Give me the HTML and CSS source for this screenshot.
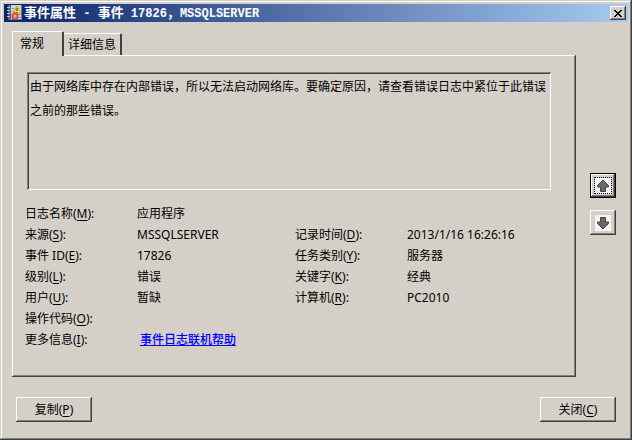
FILE: index.html
```html
<!DOCTYPE html>
<html lang="zh-CN">
<head>
<meta charset="utf-8">
<title>事件属性 - 事件 17826，MSSQLSERVER</title>
<link rel="stylesheet" href="styles.css">
</head>
<body>
<main class="window">
  <header class="titlebar">
    <svg class="app-icon" viewBox="0 0 16 16" aria-hidden="true">
      <rect x="1" y="0" width="14" height="15" fill="#c5d5ea"/>
      <rect x="1" y="0" width="3" height="15" fill="#52637f"/>
      <path d="M0 2.500h3M0 5.500h3M0 8.500h3M0 11.500h3" stroke="#c3cede"/>
      <path d="M5 3.500h3M5 6.500h2M11 9.500h3M11 12.500h3" stroke="#8a9ab4"/>
      <path d="M14 0h1v15H2v-1h12z" fill="#687b9c"/>
      <path d="M10 1l3.500 7h-7z" fill="#ffdf2b" stroke="#dba810"/>
      <path d="M10 3v3M10 7v1" stroke="#463600"/>
      <circle cx="8" cy="11" r="2.500" fill="#fff" stroke="#dc4038" stroke-width="2"/>
      <path d="M7 11h2" stroke="#dc4038"/>
    </svg>
    <h1 class="title">事件属性<span class="latin"> - </span>事件<span class="latin"> 17826</span>，<span class="latin">MSSQLSERVER</span></h1>
    <button class="window-close" type="button" aria-label="关闭窗口">
      <svg viewBox="0 0 8 7" width="8" height="7" shape-rendering="crispEdges"><path d="M0 0h2v1h1v1h2V1h1V0h2v1H7v1H6v1H5v1h1v1h1v1h1v1H6V6H5V5H3v1H2v1H0V6h1V5h1V4h1V3H2V2H1V1H0z"/></svg>
    </button>
  </header>
  <div class="content">
    <section class="tabs">
      <div class="tablist" role="tablist">
        <button class="tab tab-active" type="button" role="tab" aria-selected="true">常规</button>
        <button class="tab" type="button" role="tab" aria-selected="false">详细信息</button>
      </div>
      <div class="panel" role="tabpanel">
        <div class="description">由于网络库中存在内部错误，所以无法启动网络库。要确定原因，请查看错误日志中紧位于此错误之前的那些错误。</div>
        <dl class="details">
          <dt>日志名称(<u>M</u>):</dt><dd class="wide">应用程序</dd>
          <dt>来源(<u>S</u>):</dt><dd>MSSQLSERVER</dd>
          <dt>记录时间(<u>D</u>):</dt><dd>2013/1/16 16:26:16</dd>
          <dt>事件 ID(<u>E</u>):</dt><dd>17826</dd>
          <dt>任务类别(<u>Y</u>):</dt><dd>服务器</dd>
          <dt>级别(<u>L</u>):</dt><dd>错误</dd>
          <dt>关键字(<u>K</u>):</dt><dd>经典</dd>
          <dt>用户(<u>U</u>):</dt><dd>暂缺</dd>
          <dt>计算机(<u>R</u>):</dt><dd>PC2010</dd>
          <dt>操作代码(<u>O</u>):</dt><dd class="wide"></dd>
          <dt>更多信息(<u>I</u>):</dt><dd class="wide"><a class="help" href="#help">事件日志联机帮助</a></dd>
        </dl>
      </div>
    </section>
    <nav class="pager">
      <button class="arrow arrow-default" type="button" aria-label="上一个事件">
        <svg viewBox="0 0 16 16" width="16" height="16"><rect width="16" height="16" fill="#f4f4f4"/><path d="M8 2l5.500 5.500v1.500H10.500v4.500h-5V9h-3V7.500z" fill="#686868" stroke="#444"/></svg>
      </button>
      <button class="arrow" type="button" aria-label="下一个事件">
        <svg viewBox="0 0 16 16" width="16" height="16"><rect width="16" height="16" fill="#f4f4f4"/><path d="M8 14l5.500-5.500V7H10.500V2.500h-5V7h-3v1.500z" fill="#686868" stroke="#444"/></svg>
      </button>
    </nav>
  </div>
  <footer class="actions">
    <button class="command" type="button">复制(<u>P</u>)</button>
    <button class="command" type="button">关闭(<u>C</u>)</button>
  </footer>
</main>
</body>
</html>
```

FILE: styles.css
```css
* { box-sizing: border-box; }

body {
  margin: 0;
  background: #d4d0c8;
  color: #000;
  font: 12px/21px "Noto Sans", "Noto Sans CJK SC", sans-serif;
}

button {
  margin: 0;
  padding: 0;
  border: 0;
  background: #d4d0c8;
  color: #000;
  font: inherit;
}

svg { display: block; }
u { text-underline-offset: 2px; }

.window {
  display: flex;
  flex-direction: column;
  min-height: 100vh;
  padding: 4px;
  box-shadow: inset -1px -1px #404040, inset 1px 1px #d4d0c8, inset -2px -2px #808080, inset 2px 2px #fff;
}

.titlebar {
  display: flex;
  align-items: center;
  height: 18px;
  padding: 0 2px 0 3px;
  background: linear-gradient(to right, #0a246a, #a6caf0);
}

.app-icon { width: 16px; height: 16px; }

.title {
  flex: 1;
  margin: 0 0 0 1px;
  color: #fff;
  font: bold 13px/18px "Noto Sans CJK SC", sans-serif;
  white-space: nowrap;
}

.latin {
  font-family: "Liberation Mono", monospace;
  font-size: 12px;
}

.window-close {
  display: grid;
  place-items: center;
  width: 16px;
  height: 14px;
  box-shadow: inset -1px -1px #404040, inset 1px 1px #fff, inset -2px -2px #808080;
}

.content {
  display: flex;
  flex: 1;
  padding: 9px 12px 0 8px;
}

.tabs {
  display: flex;
  flex: 1;
  flex-direction: column;
}

.tablist {
  display: flex;
  align-items: flex-end;
}

.tab {
  height: 22px;
  padding: 0 4px;
  border: solid #fff;
  border-width: 1px 0 0;
  border-right: 2px solid #404040;
  border-radius: 2px 2px 0 0;
}

.tab-active {
  position: relative;
  width: 52px;
  height: 25px;
  margin-bottom: -1px;
  padding: 0 12px 2px 7px;
  border-left: 1px solid #fff;
  text-align: left;
}

.panel {
  flex: 1;
  padding: 17px 25px 17px 15px;
  box-shadow: inset -1px -1px #404040, inset 1px 1px #fff, inset -2px -2px #808080;
}

.description {
  height: 118px;
  padding: 3px 2px 3px 3px;
  box-shadow: inset 1px 1px #808080, inset -1px -1px #fff, inset 2px 2px #404040;
  line-height: 24px;
}

.details {
  display: grid;
  grid-template-columns: 112px 158px 112px 1fr;
  grid-auto-rows: 21px;
  margin: 13px -20px 0 -2px;
  white-space: nowrap;
}

.details dd { margin: 0; }
.details .wide { grid-column: 2 / -1; }

.help {
  margin-left: 3px;
  color: #00f;
  font-weight: 500;
}

.pager {
  display: flex;
  flex-direction: column;
  gap: 12px;
  margin: 142px 0 0 14px;
}

.arrow {
  display: grid;
  place-items: center;
  width: 26px;
  height: 25px;
  box-shadow: inset -1px -1px #404040, inset 1px 1px #fff, inset -2px -2px #808080;
}

.arrow-default {
  border: 1px solid #000;
  outline: 1px dotted #000;
  outline-offset: -5px;
}

.actions {
  display: flex;
  justify-content: space-between;
  padding: 20px 12px 14px;
}

.command {
  width: 76px;
  height: 25px;
  box-shadow: inset -1px -1px #404040, inset 1px 1px #fff, inset -2px -2px #808080;
}
```
